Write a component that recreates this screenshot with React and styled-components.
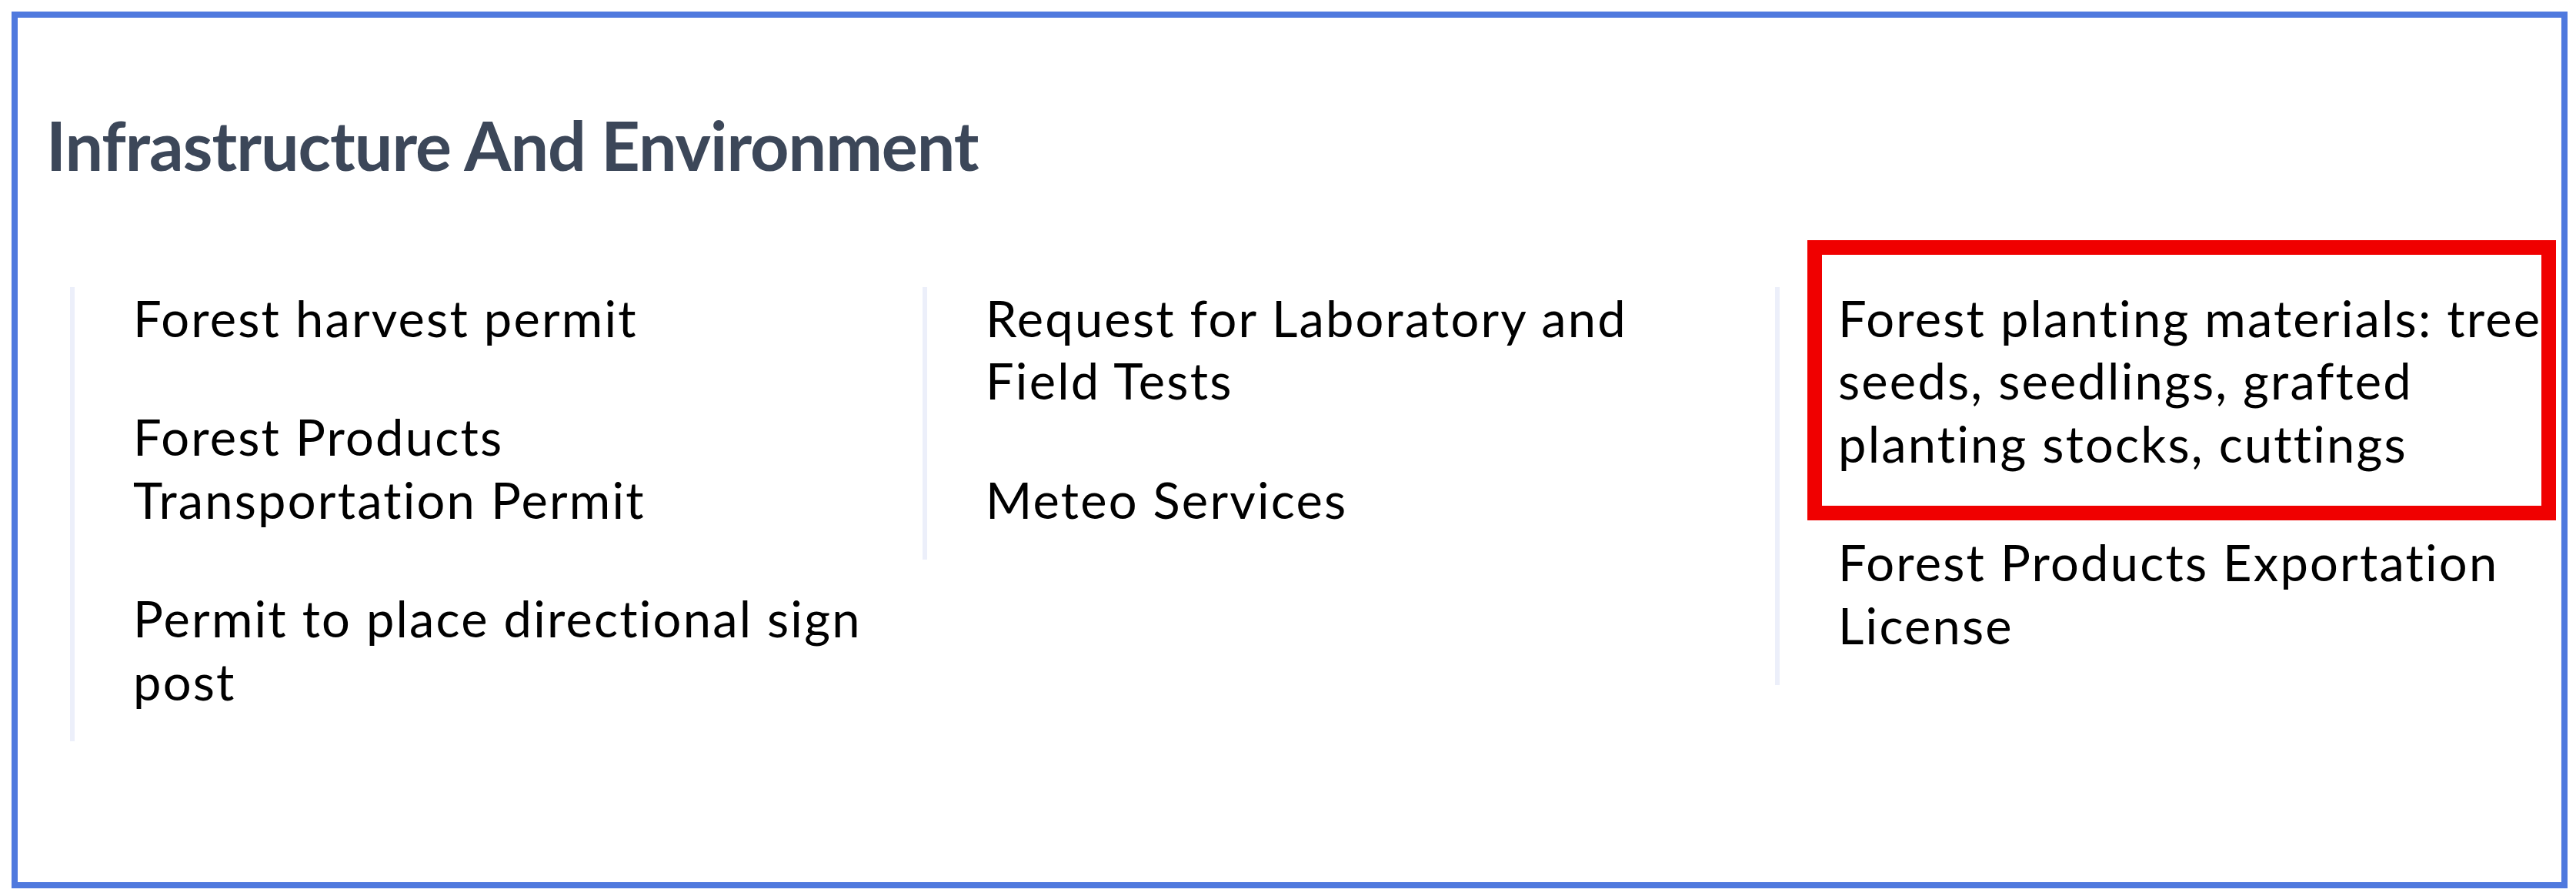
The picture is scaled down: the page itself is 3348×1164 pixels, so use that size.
import React from "react";
import styled, { createGlobalStyle } from "styled-components";

const GlobalStyle = createGlobalStyle`
  html, body {
    margin: 0;
    padding: 0;
    background: #ffffff;
  }
  body {
    font-family: Lato, "Open Sans", sans-serif;
  }
`;

// keep "Transportation Permit" together so it breaks like the original
const columns = [
  [
    "Forest harvest permit",
    "Forest Products Transportation\u00a0Permit",
    "Permit to place directional sign post",
  ],
  ["Request for Laboratory and Field Tests", "Meteo Services"],
  [
    "Forest planting materials: tree seeds, seedlings, grafted planting stocks, cuttings",
    "Forest Products Exportation License",
  ],
];

export default function App() {
  return (
    <>
      <GlobalStyle />
      <Frame>
        <Title>Infrastructure And Environment</Title>
        <ServiceGrid>
          {columns.map((items, ci) => (
            <Column key={ci}>
              {items.map((label, ii) => (
                <Item key={label} $highlight={ci === 2 && ii === 0}>
                  {label}
                </Item>
              ))}
            </Column>
          ))}
        </ServiceGrid>
      </Frame>
    </>
  );
}

const Frame = styled.section`
  box-sizing: border-box;
  width: 3322px;
  height: 1139px;
  margin: 15px 0 0 15px;
  border: 8px solid #4f79de;
  padding: 113px 0 0 37px;
  background: #ffffff;
  overflow: hidden;
`;

const Title = styled.h2`
  margin: 0;
  font-family: Lato, "Open Sans", sans-serif;
  font-size: 88px;
  line-height: 1.2;
  font-weight: 700;
  color: #3c4759;
  letter-spacing: -1px;
`;

const ServiceGrid = styled.div`
  display: grid;
  grid-template-columns: repeat(3, 1016px);
  column-gap: 92px;
  align-items: start;
  margin: 131px 0 0 31px;
`;

const Column = styled.ul`
  list-style: none;
  margin: 0;
  padding: 0 0 37px 76px;
  border-left: 6px solid #eceffa;
  display: flex;
  flex-direction: column;
  gap: 73px;
`;

const Item = styled.li`
  position: relative;
  width: 950px;
  font-family: Lato, "Open Sans", sans-serif;
  font-size: 65px;
  line-height: 81.5px;
  letter-spacing: 2.2px;
  color: #000000;

  ${({ $highlight }) =>
    $highlight &&
    `
    &::after {
      content: "";
      position: absolute;
      left: -40px;
      top: -61px;
      width: 973px;
      bottom: -59px;
      box-sizing: border-box;
      border: 19px solid #f00000;
      pointer-events: none;
    }
  `}
`;
